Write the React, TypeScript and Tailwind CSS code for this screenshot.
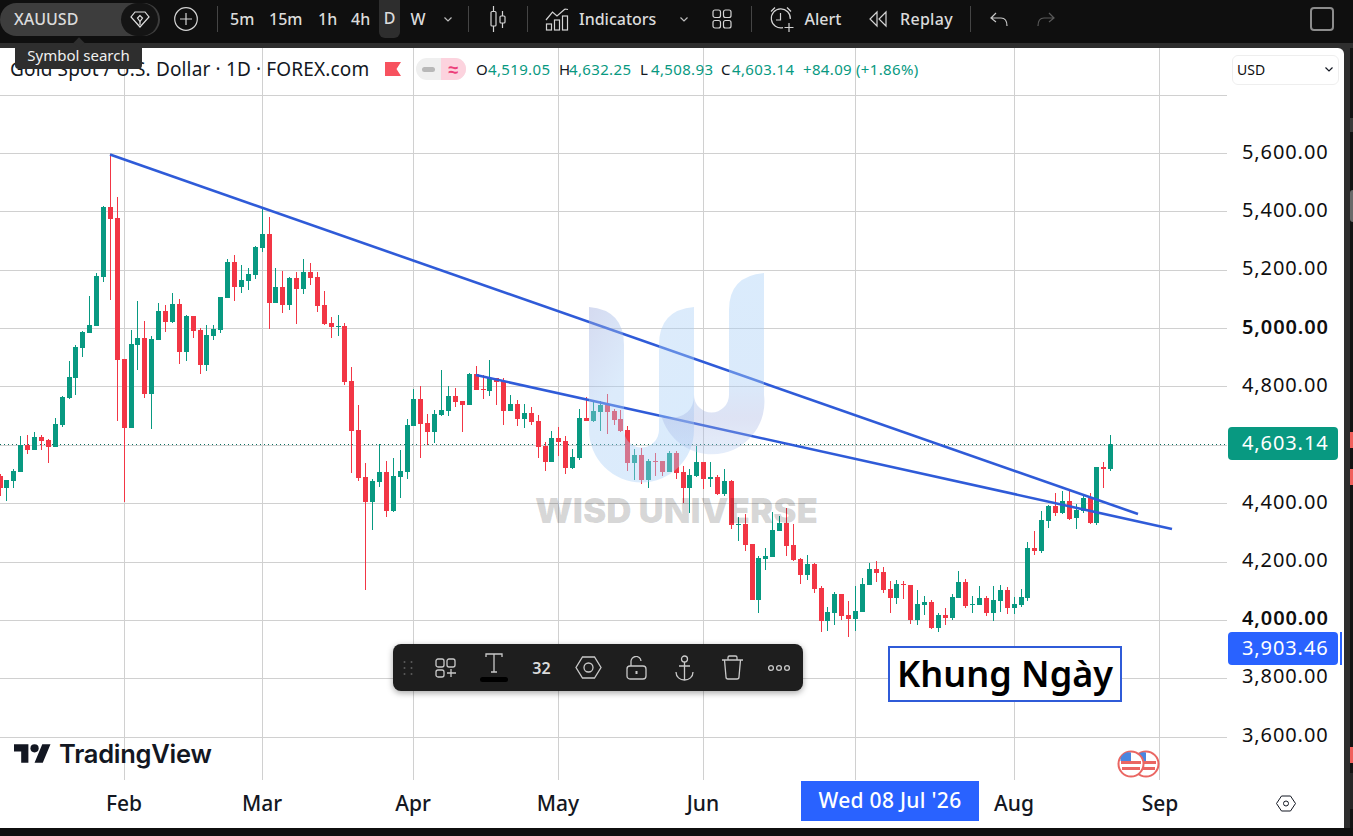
import React from 'react';

// [x, bodyTop, bodyBottom, wickTop, wickBottom, up]
type Candle = [number, number, number, number, number, number];

const candles: Candle[] = [
  [0, 476, 488, 474, 496, 0], [6.3, 480, 488, 480, 501, 1], [13.3, 471, 481, 469, 488, 1], [20.3, 445, 472, 436, 472, 1],
  [27.3, 445, 450, 435, 454, 0], [34.3, 437, 450, 432, 450, 1], [41.3, 437, 441, 435, 450, 0], [48.3, 440, 447, 439, 463, 0],
  [55.3, 424, 447, 418, 447, 1], [62.3, 397, 425, 396, 427, 1], [69.3, 377, 398, 361, 399, 1], [75.5, 347, 378, 345, 395, 1],
  [82.3, 332, 348, 331, 357, 1], [89.3, 325, 333, 296, 333, 1], [96.3, 276, 326, 273, 326, 1], [103.3, 207, 277, 206, 282, 1],
  [110.3, 207, 219, 154, 300, 0], [117.3, 218, 360, 197, 421, 0], [124.3, 359, 428, 359, 502, 0], [131.3, 344, 428, 330, 428, 1],
  [137.3, 338, 345, 301, 370, 1], [144.3, 338, 394, 321, 398, 0], [151.3, 339, 394, 336, 429, 1], [158.3, 311, 340, 303, 340, 1],
  [165.3, 311, 322, 305, 332, 0], [172.3, 304, 322, 293, 323, 1], [179.3, 304, 352, 299, 364, 0], [186.3, 316, 352, 315, 361, 1],
  [193.3, 316, 331, 316, 338, 0], [200.3, 330, 365, 328, 374, 0], [206.3, 335, 365, 325, 371, 1], [213.3, 329, 336, 325, 340, 1],
  [220.3, 297, 330, 297, 333, 1], [227.3, 262, 298, 259, 298, 1], [234.3, 262, 287, 255, 301, 0], [241.3, 280, 287, 265, 293, 1],
  [248.3, 274, 281, 268, 290, 1], [255.3, 247, 275, 246, 279, 1], [262.3, 234, 248, 207, 252, 1], [269.3, 234, 303, 217, 329, 0],
  [275.3, 287, 303, 268, 303, 1], [282.3, 287, 305, 271, 313, 0], [289.3, 278, 305, 277, 310, 1], [296.3, 278, 289, 272, 324, 0],
  [303.3, 272, 289, 259, 294, 1], [310.3, 272, 278, 263, 285, 0], [317.3, 277, 306, 272, 312, 0], [324.3, 305, 324, 291, 325, 0],
  [331.3, 323, 327, 317, 338, 0], [338.3, 326, 327, 315, 336, 1], [344.3, 326, 382, 323, 385, 0], [351.3, 381, 431, 367, 473, 0],
  [358.3, 430, 478, 405, 481, 0], [365.3, 477, 502, 463, 590, 0], [372.3, 481, 502, 479, 530, 1], [379.3, 472, 482, 444, 487, 1],
  [386.3, 472, 511, 461, 517, 0], [393.3, 476, 511, 458, 512, 1], [400.3, 471, 477, 450, 498, 1], [407.3, 425, 472, 419, 479, 1],
  [413.3, 399, 426, 389, 426, 1], [420.3, 399, 424, 386, 458, 0], [427.3, 423, 432, 414, 445, 0], [434.3, 414, 432, 410, 443, 1],
  [441.3, 410, 415, 370, 416, 1], [448.3, 396, 411, 386, 416, 1], [455.3, 396, 402, 388, 407, 0], [462.3, 401, 405, 401, 432, 0],
  [469.3, 374, 405, 373, 405, 1], [476.3, 374, 390, 366, 390, 0], [483.3, 389, 390, 375, 399, 0], [489.3, 378, 391, 360, 396, 1],
  [496.3, 378, 382, 378, 405, 0], [503.3, 381, 411, 378, 425, 0], [510.3, 404, 411, 395, 411, 1], [517.3, 404, 419, 400, 426, 0],
  [524.3, 413, 419, 404, 428, 1], [531.3, 413, 422, 407, 425, 0], [538.3, 421, 447, 415, 458, 0], [545.3, 446, 462, 442, 471, 0],
  [551.3, 438, 462, 431, 462, 1], [558.3, 438, 442, 427, 456, 0], [565.3, 441, 468, 436, 474, 0], [572.3, 457, 468, 449, 469, 1],
  [579.3, 418, 458, 409, 460, 1], [586.3, 418, 421, 397, 421, 0], [593.3, 411, 421, 402, 422, 1], [600.3, 405, 412, 401, 431, 1],
  [607.3, 405, 412, 394, 434, 0], [614.3, 411, 420, 409, 425, 0], [620.3, 419, 431, 410, 432, 0], [627.3, 430, 463, 426, 471, 0],
  [634.3, 455, 463, 449, 480, 1], [641.3, 455, 480, 448, 484, 0], [648.3, 461, 480, 459, 488, 1], [655.3, 461, 462, 453, 476, 0],
  [662.3, 461, 472, 461, 476, 0], [669.3, 453, 472, 451, 472, 1], [676.3, 453, 473, 451, 479, 0], [683.3, 472, 488, 466, 503, 0],
  [689.3, 475, 488, 469, 513, 1], [696.3, 462, 476, 446, 477, 1], [703.3, 462, 479, 462, 489, 0], [710.3, 477, 479, 462, 487, 1],
  [717.3, 477, 494, 475, 495, 0], [724.3, 481, 494, 469, 496, 1], [731.3, 481, 525, 480, 529, 0], [738.3, 524, 525, 517, 541, 1],
  [745.3, 524, 545, 514, 551, 0], [752.3, 544, 600, 544, 600, 0], [758.3, 558, 600, 556, 613, 1], [765.3, 556, 559, 548, 570, 1],
  [772.3, 530, 557, 512, 557, 1], [779.3, 523, 531, 516, 531, 1], [786.3, 523, 546, 508, 556, 0], [793.3, 545, 560, 524, 561, 0],
  [800.3, 559, 575, 558, 584, 0], [807.3, 564, 575, 555, 580, 1], [814.3, 564, 589, 563, 593, 0], [821.3, 588, 621, 586, 632, 0],
  [827.3, 612, 621, 607, 631, 1], [834.3, 594, 613, 592, 625, 1], [841.3, 594, 616, 594, 620, 0], [848.3, 615, 619, 601, 637, 0],
  [855.3, 611, 619, 586, 631, 1], [862.3, 584, 612, 578, 612, 1], [869.3, 569, 585, 563, 585, 1], [876.3, 569, 573, 561, 582, 0],
  [883.3, 572, 590, 567, 593, 0], [890.3, 589, 598, 581, 613, 0], [896.3, 584, 598, 580, 604, 1], [903.3, 584, 585, 581, 599, 0],
  [910.3, 585, 620, 585, 624, 0], [917.3, 604, 620, 590, 625, 1], [924.3, 602, 605, 596, 615, 1], [931.3, 602, 628, 600, 629, 0],
  [938.3, 615, 628, 613, 632, 1], [945.3, 615, 618, 608, 625, 0], [952.3, 597, 618, 594, 620, 1], [958.3, 582, 598, 571, 598, 1],
  [965.3, 582, 606, 579, 608, 0], [972.3, 604, 605, 596, 613, 1], [979.3, 598, 605, 586, 605, 1], [986.3, 598, 613, 596, 616, 0],
  [993.3, 600, 613, 586, 621, 1], [1000.3, 590, 601, 585, 612, 1], [1007.3, 590, 608, 587, 614, 0], [1014.3, 604, 608, 597, 614, 1],
  [1021.3, 597, 605, 589, 607, 1], [1027.3, 548, 598, 542, 601, 1], [1034.3, 548, 551, 531, 555, 0], [1041.3, 520, 551, 511, 553, 1],
  [1048.3, 506, 521, 505, 528, 1], [1055.3, 506, 513, 493, 516, 0], [1062.3, 501, 513, 491, 514, 1], [1069.3, 501, 519, 489, 520, 0],
  [1076.3, 510, 518, 504, 529, 1], [1083.3, 498, 511, 496, 513, 1], [1090.3, 498, 523, 493, 524, 0], [1096.3, 467, 523, 467, 525, 1],
  [1103.3, 467, 469, 462, 488, 0], [1110.3, 444, 469, 435, 471, 1],
];

const gridX = [124, 262, 413, 558, 703, 855, 1014, 1159];
const gridY = [95, 153, 211, 270, 328, 386, 445, 503, 562, 620, 678, 737];

const prices = [
  { label: '5,600.00' }, { label: '5,400.00' }, { label: '5,200.00' }, { label: '5,000.00', bold: true },
  { label: '4,800.00' }, { label: '4,603.14', last: true }, { label: '4,400.00' }, { label: '4,200.00' },
  { label: '4,000.00', bold: true }, { label: '3,800.00' }, { label: '3,600.00' },
];

const sans = 'font-["Noto_Sans",sans-serif]';

const Sep = ({ ml }: { ml: string }) => <div className={`${ml} h-[26px] w-px shrink-0 bg-[#454545]`} />;

const Chevron = ({ className, stroke = '#bdbdbd' }: { className: string; stroke?: string }) => (
  <svg className={`${className} shrink-0`} width="12" height="12" viewBox="0 0 12 12" fill="none" stroke={stroke} strokeWidth="1.2">
    <path d="M2.5 4.5 6 8l3.5-3.5" />
  </svg>
);

const Flag = ({ cx }: { cx: number }) => (
  <g>
    <circle cx={cx} cy={764} r={12.5} fill="#fff" stroke="#ea6662" strokeWidth="2" />
    <rect x={cx - 10} y={761} width={20} height={3} fill="#ea6662" />
    <rect x={cx - 9} y={767} width={18} height={3} fill="#ea6662" />
    <path d={`M${cx - 10.500} 761v-3a10 10 0 0 1 10.500-5.500v8.500z`} fill="#4a86e0" />
  </g>
);

function ChartCanvas() {
  return (
    <svg className="block" width="1228" height="732" viewBox="0 48 1228 732">
      {gridX.map((x) => (
        <rect key={x} x={x} y={48} width={1} height={732} fill="#d0d0d0" />
      ))}
      {gridY.map((y) => (
        <rect key={y} x={0} y={y} width={1227} height={1} fill="#d0d0d0" />
      ))}
      <line x1="0" y1="444.5" x2="1228" y2="444.5" stroke="#0b6f60" strokeWidth="1" strokeDasharray="1 3" shapeRendering="crispEdges" />
      {candles.map(([x, top, bottom, wickTop, wickBottom, up]) => {
        const c = up ? '#089981' : '#f23645';
        const cx = Math.floor(x);
        return (
          <g key={x} fill={c}>
            <rect x={cx} y={wickTop} width={1} height={wickBottom - wickTop} />
            <rect x={cx - 2} y={top} width={5} height={Math.max(bottom - top, 1)} />
          </g>
        );
      })}
      <line x1="110" y1="154.5" x2="1138" y2="514" stroke="#2f5bd8" strokeWidth="2.6" />
      <line x1="476" y1="375" x2="1172" y2="529" stroke="#2f5bd8" strokeWidth="2.6" />
      {/* watermark sits over the candles */}
      <defs>
        <linearGradient id="wm" x1="0" y1="0" x2="0.8" y2="0.8">
          <stop offset="0" stopColor="#9aa8dc" stopOpacity="0.42" />
          <stop offset="0.45" stopColor="#a8cdf5" stopOpacity="0.4" />
          <stop offset="1" stopColor="#a8d0f8" stopOpacity="0.42" />
        </linearGradient>
        <linearGradient id="wm2" x1="0" y1="0" x2="0" y2="1">
          <stop offset="0" stopColor="#a8d0f8" stopOpacity="0.42" />
          <stop offset="0.6" stopColor="#a8cdf5" stopOpacity="0.42" />
          <stop offset="0.8" stopColor="#a0aee0" stopOpacity="0.35" />
          <stop offset="1" stopColor="#a8c4f0" stopOpacity="0.3" />
        </linearGradient>
      </defs>
      <path d="M589 307Q624 310 624 345V430A17.5 17.5 0 0 0 659 430V345Q659 310 694 307V430A52.5 52.5 0 0 1 589 430Z" fill="url(#wm)" />
      <path d="M764 273Q729 276 729 310V395A17.5 17.5 0 0 1 694 395Q694 420 662 418A52.500 52.500 0 0 0 764 395Z" fill="url(#wm2)" />
      <text x="535" y="523" textLength="283" lengthAdjust="spacingAndGlyphs" fontFamily="Inter, sans-serif" fontWeight="900" fontSize="34" fill="#000" fillOpacity="0.16">
        WISD UNIVERSE
      </text>
      <Flag cx={1146} />
      <Flag cx={1131} />
    </svg>
  );
}

function TopBar() {
  return (
    <div className={`${sans} flex h-[43px] shrink-0 items-center bg-[#0f0f0f] pb-[5px] text-[16px] font-medium text-[#dbdbdb]`}>
      {/* symbol pill */}
      <div className="flex h-[33px] w-[160px] shrink-0 items-center justify-between rounded-full bg-[#3d3d3d] pl-[14px] pr-[2px]">
        <span>XAUUSD</span>
        <div className="flex h-[33px] w-[37px] items-center justify-center rounded-full bg-[#141414]">
          <svg width="20" height="18" viewBox="0 0 20 18" fill="none" stroke="#e0e0e0" strokeWidth="1.2">
            <path d="M5 2h10l4 5-9 10L1 7z" />
            <path d="M10 5.500 7.500 8 10 11.500 12.500 8z" />
            <path d="M10 11.500V15" />
          </svg>
        </div>
      </div>
      <svg className="ml-[14px] shrink-0" width="24" height="24" viewBox="0 0 24 24" fill="none" stroke="#d4d4d4" strokeWidth="1.2">
        <circle cx="12" cy="12" r="11.3" />
        <path d="M12 6v12M6 12h12" />
      </svg>
      <Sep ml="ml-[19px]" />
      <span className="ml-[12px] w-[24px] text-center">5m</span>
      <span className="ml-[15px] w-[33px] text-center">15m</span>
      <span className="ml-[16px] w-[18px] text-center">1h</span>
      <span className="ml-[15px] w-[18px] text-center">4h</span>
      <div className="ml-[10px] mt-[-3px] flex h-[40px] w-[21px] items-center justify-center rounded-b-md bg-[#2e2e2e]">D</div>
      <span className="ml-[10px] w-[16px] text-center">W</span>
      <Chevron className="ml-[16px]" />
      <Sep ml="ml-[14px]" />
      <svg className="ml-[19px] shrink-0" width="20" height="28" viewBox="0 0 20 28" fill="none" stroke="#d4d4d4" strokeWidth="1.2">
        <path d="M5.5 1v5M5.5 21v6M14.5 6v5M14.5 18v5" />
        <rect x="3" y="6.5" width="5" height="14.5" rx="1" />
        <rect x="12" y="11" width="5" height="7" rx="1" />
      </svg>
      <Sep ml="ml-[19px]" />
      <svg className="ml-[16px] shrink-0" width="26" height="26" viewBox="0 0 26 26" fill="none" stroke="#d4d4d4" strokeWidth="1.2">
        <path d="M2 14 8.5 6l4.5 4 8-7M21 3l3 .5" />
        <rect x="2.5" y="18" width="5" height="6" />
        <rect x="10.5" y="14" width="5" height="10" />
        <rect x="18.5" y="10" width="5" height="14" />
      </svg>
      <span className="ml-[9px] w-[77px] whitespace-nowrap text-center">Indicators</span>
      <Chevron className="ml-[22px]" />
      <svg className="ml-[22px] shrink-0" width="20" height="20" viewBox="0 0 20 20" fill="none" stroke="#d4d4d4" strokeWidth="1.2">
        <rect x="1" y="1" width="7.5" height="7.5" rx="2" />
        <rect x="11.5" y="1" width="7.5" height="7.5" rx="2" />
        <rect x="1" y="11.5" width="7.5" height="7.5" rx="2" />
        <rect x="11.5" y="11.5" width="7.5" height="7.5" rx="2" />
      </svg>
      <Sep ml="ml-[19px]" />
      <svg className="ml-[16px] shrink-0" width="26" height="28" viewBox="0 0 26 28" fill="none" stroke="#d4d4d4" strokeWidth="1.2">
        <path d="M3 6.5 7 2.5M23 6.5l-4-4" />
        <path d="M15 22.6A9.5 9.5 0 1 1 22.3 14" />
        <path d="M12.5 8v7H8M21 18v9M16.5 22.5h9" />
      </svg>
      <span className="ml-[10px] w-[38px] text-center">Alert</span>
      <svg className="ml-[26px] shrink-0" width="20" height="18" viewBox="0 0 20 18" fill="none" stroke="#d4d4d4" strokeWidth="1.2">
        <path d="M9 2 2 9l7 7zM18 2l-7 7 7 7z" />
      </svg>
      <span className="ml-[12px] w-[52px] whitespace-nowrap text-center tracking-[0.3px]">Replay</span>
      <Sep ml="ml-[18px]" />
      <svg className="ml-[18px] shrink-0" width="20" height="18" viewBox="0 0 20 18" fill="none" stroke="#c8c8c8" strokeWidth="1.2">
        <path d="M7 3 2 8l5 4M2 8h10q6 0 6 8" />
      </svg>
      <svg className="ml-[27px] shrink-0" width="20" height="18" viewBox="0 0 20 18" fill="none" stroke="#5a5a5a" strokeWidth="1.2">
        <path d="M13 3l5 5-5 4M18 8H8q-6 0-6 8" />
      </svg>
      <div className="ml-[254px] h-[24px] w-[24px] shrink-0 rounded-[4px] border-2 border-[#8c8c8c]" />
    </div>
  );
}

function Legend() {
  return (
    <div className={`${sans} absolute left-[10px] top-[9px] flex h-[24px] items-center whitespace-nowrap`}>
      <span className="w-[362px] text-[19px] tracking-[0.15px] text-[#131722]">Gold Spot / U.S. Dollar · 1D · FOREX.com</span>
      <svg className="ml-[13px]" width="16" height="14" viewBox="0 0 16 14">
        <path d="M0 0h16l-4.5 7L16 14H0z" fill="#f7525f" />
      </svg>
      <div className="ml-[15px] flex h-[22px] w-[50px] overflow-hidden rounded-full bg-[#efefef]">
        <div className="flex w-[25px] items-center justify-center">
          <div className="h-[5px] w-[13px] rounded-full bg-[#b8b8b8]" />
        </div>
        <div className="flex w-[25px] items-center justify-center bg-[#fcd3de] text-[18px] font-bold leading-none text-[#ec407a]">≈</div>
      </div>
      <div className="ml-[10px] flex text-[15px] tracking-[0.35px] text-[#089981]">
        <span className="w-[12px] text-[#131722]">O</span><span className="w-[71px]">4,519.05</span>
        <span className="w-[10px] text-[#131722]">H</span><span className="w-[71px]">4,632.25</span>
        <span className="w-[11px] text-[#131722]">L</span><span className="w-[70px]">4,508.93</span>
        <span className="w-[11px] text-[#131722]">C</span><span className="w-[71px]">4,603.14</span>
        <span className="w-[53px]">+84.09</span><span>(+1.86%)</span>
      </div>
    </div>
  );
}

function DrawToolbar() {
  const icon = { fill: 'none', stroke: '#c9c9c9', strokeWidth: 1.3 };
  return (
    <div className="absolute left-[393px] top-[596px] flex h-[47px] w-[410px] items-center rounded-lg bg-[#1e1e1e] pl-[10px] shadow-[0_2px_6px_rgba(0,0,0,0.35)]">
      <svg width="10" height="16" viewBox="0 0 10 16" fill="#5c5c5c">
        {[2, 8, 14].map((y) => (
          <g key={y}>
            <circle cx="1.5" cy={y} r="1" />
            <circle cx="8.5" cy={y} r="1" />
          </g>
        ))}
      </svg>
      <div className="ml-[9px] flex w-[48px] justify-center">
        <svg width="22" height="20" viewBox="0 0 22 20" {...icon}>
          <rect x="1" y="1" width="8" height="8" rx="2" />
          <rect x="12" y="1" width="8" height="8" rx="2" />
          <rect x="1" y="12" width="8" height="7" rx="2" />
          <path d="M16 11v8M12 15h9" />
        </svg>
      </div>
      <div className="relative flex h-full w-[48px] justify-center pt-[9px]">
        <svg width="18" height="20" viewBox="0 0 18 20" {...icon}>
          <path d="M1 4V1h16v3M9 1v18M6 19h6" />
        </svg>
        <div className="absolute bottom-[9px] left-[10px] h-[5px] w-[28px] rounded-full bg-black" />
      </div>
      <div className={`${sans} w-[47px] text-center text-[16px] font-semibold text-[#dbdbdb]`}>32</div>
      <div className="flex w-[47px] justify-center">
        <svg width="27" height="23" viewBox="0 0 27 23" {...icon}>
          <path d="M7.5 1h12l6.5 10.5L19.5 22h-12L1 11.5z" />
          <circle cx="13.5" cy="11.5" r="4.5" />
        </svg>
      </div>
      <div className="flex w-[48px] justify-center">
        <svg width="21" height="24" viewBox="0 0 21 24" {...icon}>
          <rect x="1" y="10" width="19" height="13" rx="3" />
          <path d="M5 10V6a5 5 0 0 1 10-1" />
          <path d="M10.5 15v3" strokeWidth="2" />
        </svg>
      </div>
      <div className="flex w-[48px] justify-center">
        <svg width="19" height="26" viewBox="0 0 19 26" {...icon}>
          <circle cx="9.5" cy="4" r="3" />
          <path d="M9.5 7v18M4 11h11M1 17c0 5 4 8 8.5 8s8.5-3 8.5-8" />
        </svg>
      </div>
      <div className="flex w-[48px] justify-center">
        <svg width="23" height="25" viewBox="0 0 23 25" {...icon}>
          <path d="M1 5h21M7 5V2.5A1.5 1.5 0 0 1 8.5 1h6A1.5 1.5 0 0 1 16 2.5V5M3.5 5 5 22a2 2 0 0 0 2 2h9a2 2 0 0 0 2-2l1.500-17" />
        </svg>
      </div>
      <div className="flex w-[46px] justify-center">
        <svg width="24" height="8" viewBox="0 0 24 8" {...icon}>
          <circle cx="4" cy="4" r="2.400" />
          <circle cx="12" cy="4" r="2.400" />
          <circle cx="20" cy="4" r="2.400" />
        </svg>
      </div>
    </div>
  );
}

function PriceAxis() {
  return (
    <div className={`${sans} relative flex h-full w-[114px] shrink-0 flex-col text-[20px] tracking-[0.9px] text-[#0f0f0f]`}>
      <div className="ml-[4px] mt-[7px] flex h-[30px] w-[107px] shrink-0 items-center justify-between rounded-md border border-[#eeeeee] pb-[2px] pl-[4px] pr-[3px] text-[14px] tracking-normal">
        <span>USD</span>
        <Chevron className="" stroke="#131722" />
      </div>
      <div className="mt-[37.6px] flex flex-col">
        {prices.map((p) =>
          p.last ? (
            <div key={p.label} className="flex h-[58.3px] items-center">
              <div className="flex h-[33px] w-[110px] items-center rounded-sm bg-[#089981] pl-[14px] text-white">{p.label}</div>
            </div>
          ) : (
            <div key={p.label} className={`flex h-[58.3px] items-center pl-[14px] ${p.bold ? 'font-semibold' : ''}`}>
              {p.label}
            </div>
          )
        )}
      </div>
      {/* crosshair label over the scale */}
      <div className="absolute left-0 top-[584px] flex h-[33px] w-[110px] items-center rounded-sm bg-[#2962ff] pb-[1px] pl-[14px] text-white">3,903.46</div>
      <div className="absolute left-[112px] top-[584px] h-[33px] w-[2px] bg-[#2962ff]" />
    </div>
  );
}

function TimeAxis() {
  const label = 'h-[44px] w-[60px] shrink-0 text-center leading-[44px]';
  return (
    <div className={`${sans} flex h-[48px] shrink-0 items-start pl-[94px] pt-px text-[21px] font-medium text-[#131722]`}>
      <span className={label}>Feb</span>
      <span className={`${label} ml-[78px]`}>Mar</span>
      <span className={`${label} ml-[91px]`}>Apr</span>
      <span className={`${label} ml-[85px]`}>May</span>
      <span className={`${label} ml-[85px]`}>Jun</span>
      <div className="ml-[68px] flex h-[40px] w-[178px] shrink-0 items-center justify-center whitespace-nowrap bg-[#2962ff] tracking-[0.3px] text-white">Wed 08 Jul &apos;26</div>
      <span className={`${label} ml-[5px]`}>Aug</span>
      <span className={`${label} ml-[86px]`}>Sep</span>
      <svg className="ml-[86px] mt-[14px] shrink-0" width="20" height="17" viewBox="0 0 20 17" fill="none" stroke="#131722" strokeWidth="1">
        <path d="M5.500 1h9l5 7.500-5 7.500h-9l-5-7.500z" />
        <circle cx="10" cy="8.500" r="2.500" />
      </svg>
    </div>
  );
}

export default function App() {
  return (
    <div className="relative flex h-[836px] w-[1353px] flex-col overflow-hidden bg-[#0f0f0f]">
      <TopBar />
      <div className="flex h-[785px] shrink-0 bg-[#2e2e2e] pt-[5px]">
        <div className="flex h-[780px] w-[1344px] shrink-0 flex-col overflow-hidden rounded-tr-md bg-white">
          <div className="flex h-[732px] shrink-0">
            <div className="relative h-full w-[1228px] shrink-0">
              <ChartCanvas />
              <Legend />
              <DrawToolbar />
              {/* text drawing */}
              <div className={`${sans} absolute left-[888px] top-[598px] flex h-[56px] w-[234px] items-center justify-center border-2 border-[#2f5bd8] bg-white pb-[1px] text-[36px] font-semibold leading-none text-black`}>
                Khung Ngày
              </div>
              {/* TradingView logo */}
              <div className="absolute left-[14px] top-[693px] flex items-center">
                <svg width="37" height="19" viewBox="0 4 36 18" fill="#131722">
                  <path d="M14 22H7V11H0V4h14v18zM28 22h-8l7.500-18h8L28 22z" />
                  <circle cx="20" cy="8" r="4" />
                </svg>
                <span className='ml-[8px] font-["Inter",sans-serif] text-[25.5px] font-semibold leading-none tracking-[-0.25px] text-[#131722]'>TradingView</span>
              </div>
            </div>
            <PriceAxis />
          </div>
          <TimeAxis />
        </div>
        {/* neighbouring panel, mostly cut off */}
        <div className="ml-[6px] flex h-[780px] flex-1 flex-col bg-[#131313]">
          <div className="mt-[70px] h-[14px] bg-[#3a3a3a]" />
          <div className="mt-[58px] h-[32px] rounded-l bg-[#6a6a6a]" />
          <div className="mt-[210px] h-[16px] bg-[#f0605c]" />
          <div className="mt-[21px] h-[16px] bg-[#f0605c]" />
          <div className="mt-[262px] h-[16px] bg-[#f0605c]" />
          <div className="mt-[10px] h-[36px] bg-[#262626]" />
        </div>
      </div>
      {/* symbol search tooltip */}
      <div className={`${sans} absolute left-[15px] top-[43px] flex h-[26px] w-[127px] items-center justify-center rounded-sm bg-[#2e2e2e] pb-[2px] text-[15px] text-[#f0f0f0]`}>
        Symbol search
        <div className="absolute left-[60px] top-[-4px] h-[8px] w-[8px] rotate-45 bg-[#2e2e2e]" />
      </div>
    </div>
  );
}
